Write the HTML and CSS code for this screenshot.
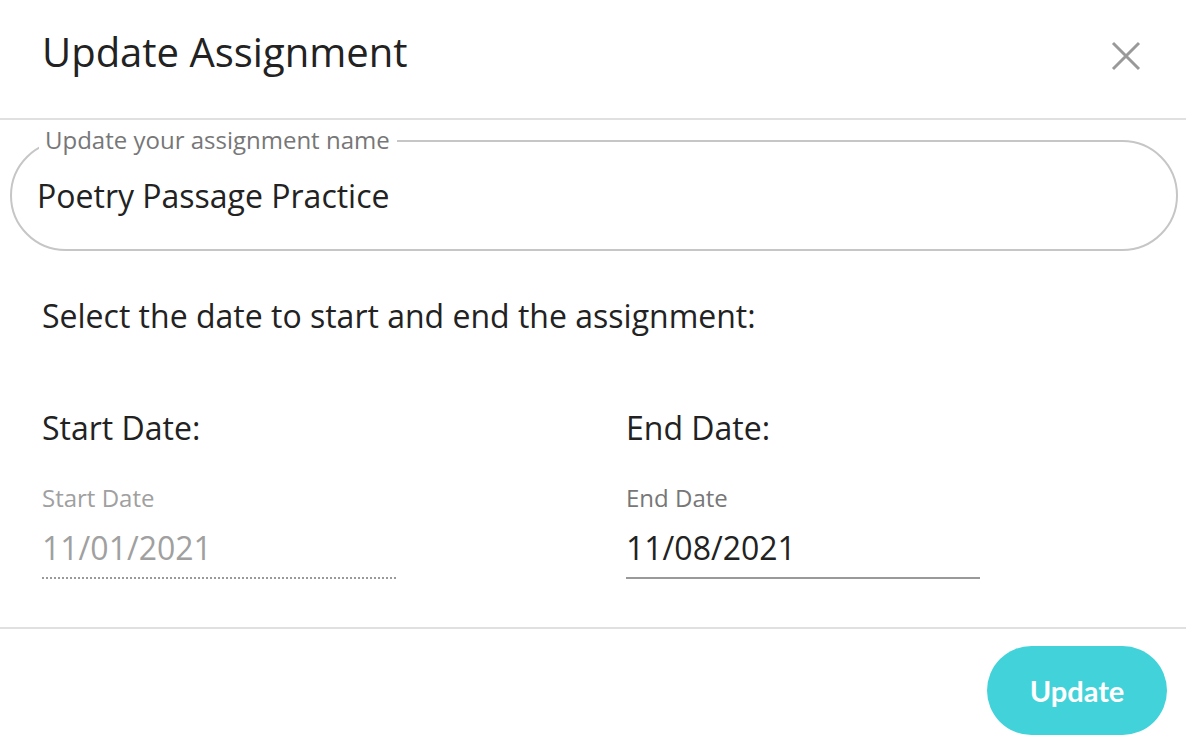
FILE: index.html
```html
<!DOCTYPE html>
<html>
<head>
<meta charset="utf-8">
<link rel="stylesheet" href="styles.css">
</head>
<body>
<div class="dialog">
  <header class="header">
    <h1 class="title">Update Assignment</h1>
    <button class="close" aria-label="Close">
      <svg width="30" height="30" viewBox="0 0 30 30"><path d="M2 2L28 28M28 2L2 28" stroke="#999" stroke-width="3" fill="none"/></svg>
    </button>
  </header>
  <div class="content">
    <fieldset class="name-field">
      <legend class="name-legend">Update your assignment name</legend>
      <div class="name-value">Poetry Passage Practice</div>
    </fieldset>
    <p class="instructions">Select the date to start and end the assignment:</p>
    <div class="dates">
      <div class="date-col">
        <div class="date-heading">Start Date:</div>
        <div class="date-field disabled">
          <div class="date-label">Start Date</div>
          <div class="date-value">11/01/2021</div>
        </div>
      </div>
      <div class="date-col">
        <div class="date-heading">End Date:</div>
        <div class="date-field">
          <div class="date-label">End Date</div>
          <div class="date-value">11/08/2021</div>
        </div>
      </div>
    </div>
  </div>
  <footer class="footer">
    <button class="update-btn">Update</button>
  </footer>
</div>
</body>
</html>
```

FILE: styles.css
```css
html, body {
  margin: 0;
  padding: 0;
  background: #fff;
}
body {
  font-family: "Open Sans", "Liberation Sans", sans-serif;
  color: #222;
}
.dialog {
  width: 1186px;
  height: 748px;
  overflow: hidden;
}
.header {
  box-sizing: border-box;
  height: 120px;
  border-bottom: 2px solid #e0e0e0;
  display: flex;
  align-items: flex-start;
  justify-content: space-between;
}
.title {
  margin: 27px 0 0 42px;
  font-size: 40px;
  font-weight: 400;
  line-height: 50px;
  color: #222;
}
.close {
  margin: 41px 45px 0 0;
  padding: 0;
  border: 0;
  background: none;
  width: 30px;
  height: 30px;
  display: flex;
}
.content {
  box-sizing: border-box;
  height: 509px;
  padding: 6px 8px 0 10px;
  border-bottom: 2px solid #e0e0e0;
}
.name-field {
  box-sizing: border-box;
  margin: 0;
  padding: 0 0 0 25px;
  height: 125px;
  border: 2px solid #c6c6c6;
  border-radius: 56px;
}
.name-legend {
  margin-left: 2px;
  padding: 0 7px 2px 6px;
  font-size: 24px;
  line-height: 28px;
  color: #777;
}
.name-value {
  margin-top: 20px;
  font-size: 32px;
  line-height: 40px;
  color: #222;
}
.instructions {
  margin: 45px 0 0 32px;
  font-size: 32px;
  line-height: 40px;
}
.dates {
  display: flex;
  gap: 230px;
  margin: 72px 0 0 32px;
}
.date-col {
  width: 354px;
}
.date-heading {
  font-size: 32px;
  line-height: 40px;
}
.date-field {
  margin-top: 36px;
  border-bottom: 2px solid #999;
}
.date-field.disabled {
  border-bottom: 2px dotted #9a9a9a;
}
.date-label {
  font-size: 24px;
  line-height: 28px;
  color: #777;
}
.date-value {
  margin-top: 16px;
  padding-bottom: 9px;
  font-size: 32px;
  line-height: 40px;
  color: #222;
}
.disabled .date-label,
.disabled .date-value {
  color: #a0a0a0;
}
.footer {
  display: flex;
  justify-content: flex-end;
  padding: 17px 19px 0 0;
}
.update-btn {
  width: 180px;
  height: 89px;
  border: 0;
  border-radius: 45px;
  background: #41d3d9;
  color: #fff;
  font-family: Lato, "Open Sans", sans-serif;
  font-weight: 700;
  font-size: 29px;
}
```
